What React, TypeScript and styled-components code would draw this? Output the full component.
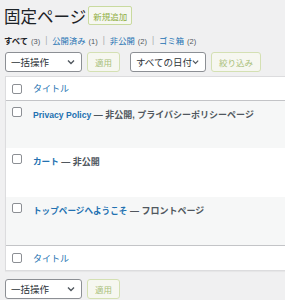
import React from "react";
import styled, { createGlobalStyle } from "styled-components";

const Global = createGlobalStyle`
  html, body {
    margin: 0;
    padding: 0;
    background: #f0f0f1;
    overflow: hidden;
  }
  body {
    font-family: "Liberation Sans", "Noto Sans CJK JP", sans-serif;
    color: #3c434a;
  }
`;

const Wrap = styled.div`
  width: 285px;
  height: 300px;
  padding: 0 0 0 5px;
  box-sizing: border-box;
  overflow: hidden;
`;

const Head = styled.div`
  display: flex;
  align-items: center;
  gap: 2px;
  height: 31px;
  margin-left: -1px;
`;

const Title = styled.h1`
  margin: 0;
  font-size: 16.5px;
  font-weight: 400;
  color: #1d2327;
`;

const AddButton = styled.button`
  font-family: inherit;
  font-size: 8.5px;
  height: 19px;
  padding: 0 4px;
  border: 1px solid #c9da9f;
  border-radius: 2px;
  background: #f6f7f1;
  color: #8fae43;
`;

const SubNav = styled.ul`
  display: flex;
  list-style: none;
  margin: 0;
  padding: 0;
  height: 18px;
  font-size: 8.3px;
  align-items: center;
  color: #a7aaad;
  margin-left: -1px;
`;

const NavItem = styled.li<{ $current?: boolean }>`
  color: ${(p) => (p.$current ? "#1d2327" : "#2271b1")};
  font-weight: ${(p) => (p.$current ? 700 : 400)};
  white-space: nowrap;
`;

const Count = styled.span`
  color: #50575e;
  font-weight: 400;
  font-size: 7.5px;
  margin-left: 3px;
`;

const Sep = styled.span`
  color: #a7aaad;
  margin: 0 5px;
`;

const Actions = styled.div`
  display: flex;
  align-items: center;
  gap: 5px;
  height: 22px;
  margin-top: 2px;
`;

const Select = styled.div<{ $w: number; $gap?: number }>`
  width: ${(p) => p.$w}px;
  height: 20px;
  margin-left: ${(p) => p.$gap ?? 0}px;
  box-sizing: border-box;
  border: 1px solid #8c8f94;
  border-radius: 3px;
  background: #fff;
  display: flex;
  align-items: center;
  justify-content: space-between;
  padding: 0 6px 0 5px;
  font-size: 9.5px;
  white-space: nowrap;
  color: #2c3338;
`;

const Chevron = () => (
  <svg width="8" height="6" viewBox="0 0 8 6">
    <path d="M1 1.5 L4 4.5 L7 1.5" fill="none" stroke="#50575e" strokeWidth="1.4" />
  </svg>
);

const GhostButton = styled.button`
  font-family: inherit;
  font-size: 8.5px;
  height: 20px;
  padding: 0 7px;
  border: 1px solid #d4e0b3;
  border-radius: 3px;
  background: #f6f7f0;
  color: #a9c07a;
`;

const Table = styled.div`
  margin-top: 3px;
  width: 300px;
  border: 1px solid #dcdcde;
  background: #fff;
  box-shadow: 0 1px 1px rgba(0, 0, 0, 0.04);
`;

const Row = styled.div<{ $h: number; $alt?: boolean; $top?: boolean; $bottom?: boolean }>`
  display: flex;
  align-items: ${(p) => (p.$top ? "flex-start" : "center")};
  height: ${(p) => p.$h}px;
  box-sizing: border-box;
  padding: ${(p) => (p.$top ? "6px 0 0 6px" : "0 0 0 6px")};
  gap: 11px;
  background: ${(p) => (p.$alt ? "#f6f7f7" : "#fff")};
  border-bottom: ${(p) => (p.$bottom ? "1px solid #c3c4c7" : "none")};
`;

const FootRow = styled(Row)`
  border-top: 1px solid #c3c4c7;
`;

const Check = styled.span`
  width: 8px;
  height: 8px;
  border: 1px solid #8c8f94;
  border-radius: 2px;
  background: #fff;
  flex: none;
`;

const ColHead = styled.span`
  font-size: 9px;
  color: #2271b1;
`;

const Line = styled.span`
  line-height: 11px;
  white-space: nowrap;
`;

const PageLink = styled.span`
  font-size: 8.6px;
  font-weight: 700;
  color: #2271b1;
`;

const State = styled.span`
  font-size: 9px;
  font-weight: 600;
  color: #50575e;
`;

const Bottom = styled.div`
  display: flex;
  align-items: center;
  gap: 5px;
  margin-top: 8px;
`;

const rows = [
  { title: "Privacy Policy", state: " — 非公開, プライバシーポリシーページ", alt: true, h: 47 },
  { title: "カート", state: " — 非公開", alt: false, h: 49 },
  { title: "トップページへようこそ", state: " — フロントページ", alt: true, h: 48 },
];

export default function App() {
  return (
    <Wrap>
      <Global />
      <Head>
        <Title>固定ページ</Title>
        <AddButton>新規追加</AddButton>
      </Head>
      <SubNav>
        <NavItem $current>
          すべて<Count>(3)</Count>
        </NavItem>
        <Sep>|</Sep>
        <NavItem>
          公開済み<Count>(1)</Count>
        </NavItem>
        <Sep>|</Sep>
        <NavItem>
          非公開<Count>(2)</Count>
        </NavItem>
        <Sep>|</Sep>
        <NavItem>
          ゴミ箱<Count>(2)</Count>
        </NavItem>
      </SubNav>
      <Actions>
        <Select $w={77}>
          一括操作
          <Chevron />
        </Select>
        <GhostButton>適用</GhostButton>
        <Select $w={76} $gap={5}>
          すべての日付
          <Chevron />
        </Select>
        <GhostButton>絞り込み</GhostButton>
      </Actions>
      <Table>
        <Row $h={24} $bottom>
          <Check />
          <ColHead>タイトル</ColHead>
        </Row>
        {rows.map((r) => (
          <Row key={r.title} $h={r.h} $alt={r.alt} $top>
            <Check />
            <Line>
              <PageLink>{r.title}</PageLink>
              <State>{r.state}</State>
            </Line>
          </Row>
        ))}
        <FootRow $h={25}>
          <Check />
          <ColHead>タイトル</ColHead>
        </FootRow>
      </Table>
      <Bottom>
        <Select $w={77}>
          一括操作
          <Chevron />
        </Select>
        <GhostButton>適用</GhostButton>
      </Bottom>
    </Wrap>
  );
}
